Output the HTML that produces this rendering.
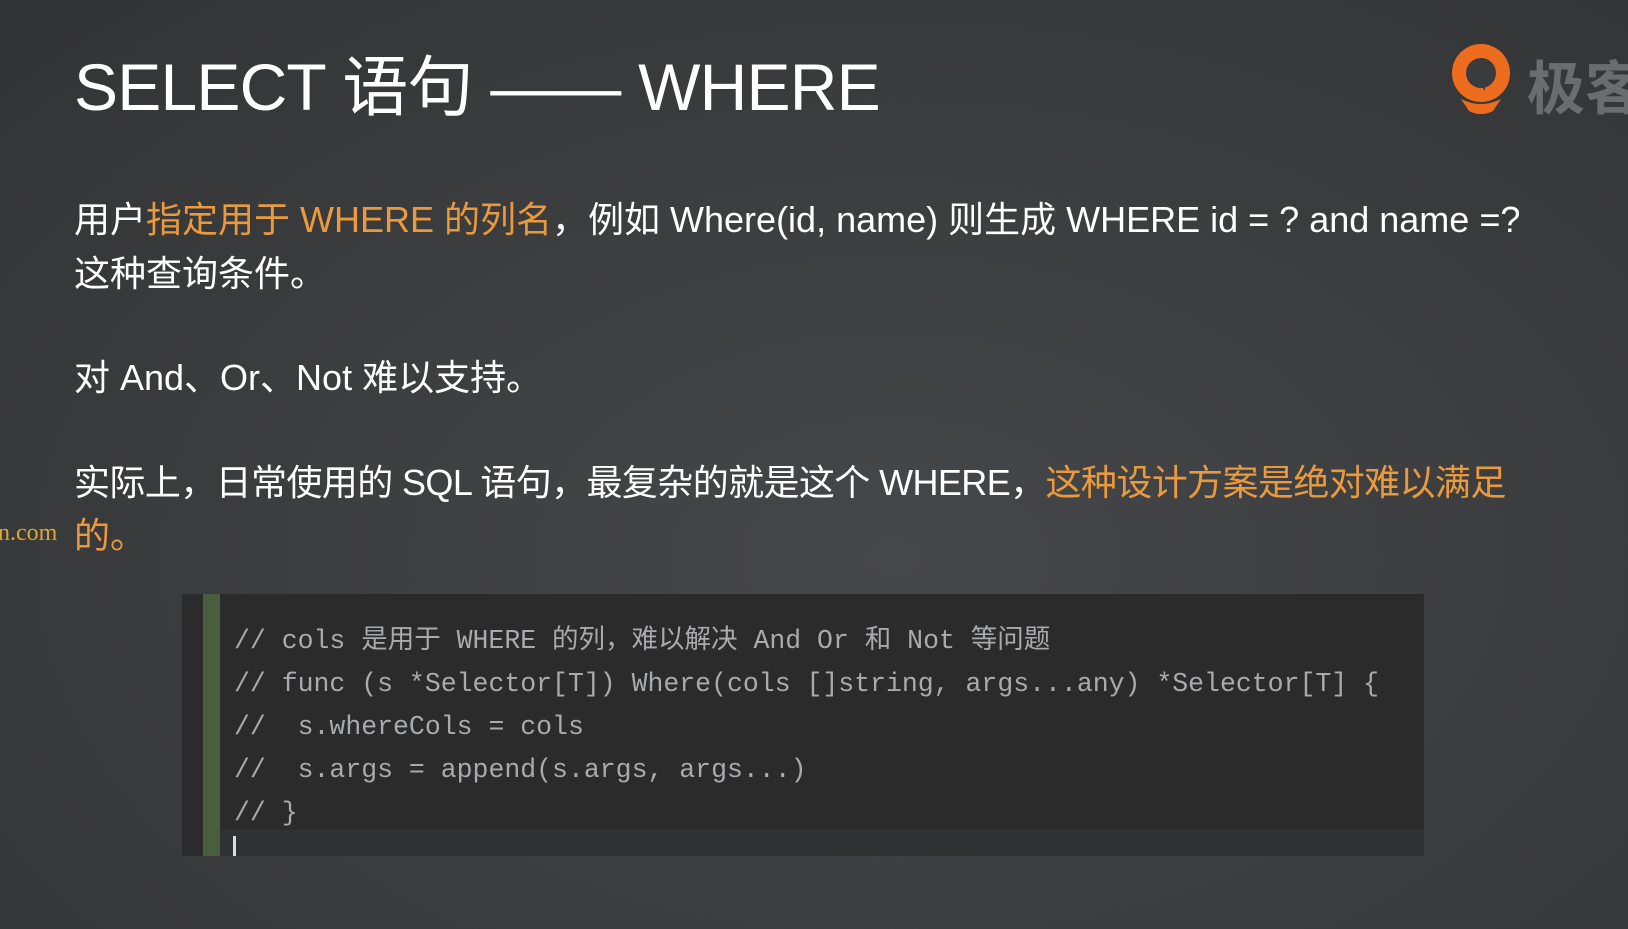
<!DOCTYPE html>
<html><head><meta charset="utf-8"><style>
html,body{margin:0;padding:0}
body{width:1628px;height:929px;overflow:hidden;position:relative;
background:radial-gradient(ellipse at 55% 60%,#46474a 0%,#3b3c3e 55%,#323335 100%);
font-family:"Liberation Sans","Noto Sans CJK SC",sans-serif;color:#fff}
.t{position:absolute;white-space:nowrap}
.o{color:#ea9a3c}
.code{position:absolute;left:182px;top:594px;width:1242px;height:262px;background:#2b2b2c}
.bar{position:absolute;left:21px;top:0;width:17px;height:262px;background:#4a5e3f}
.cl{position:absolute;left:52px;height:30px;line-height:30px;font-family:"Liberation Mono","Noto Sans CJK SC",monospace;font-size:26.5px;color:#a9aaac;white-space:pre}
.cur{position:absolute;left:38px;top:236px;width:1204px;height:26px;background:#313233}
</style></head><body>
<div class="t" style="left:74px;top:47px;font-size:66px;line-height:80px;letter-spacing:-0.8px">SELECT 语句 —— WHERE</div>
<svg style="position:absolute;left:1449px;top:43px" width="64" height="72" viewBox="0 0 64 72">
<circle cx="32" cy="30" r="29" fill="#ee6c1e"/>
<circle cx="32" cy="30" r="15" fill="#3a3b3d"/>
<path d="M12 56 Q32 66 52 56 L44 68 Q32 74 20 68 Z" fill="#ee6c1e"/>
<path d="M28 36 L36 22 L36 48 Z" fill="#3a3b3d"/>
</svg>
<div class="t" style="left:1527px;top:42px;font-size:58px;font-weight:bold;color:#6b6c6e">极客</div>
<div class="t" style="left:74px;top:191px;font-size:36px">用户<span class="o">指定用于 WHERE 的列名</span>，例如 Where(id, name) 则生成 WHERE id = ? and name =?</div>
<div class="t" style="left:74px;top:245px;font-size:36px">这种查询条件。</div>
<div class="t" style="left:74px;top:349px;font-size:36px">对 And、Or、Not 难以支持。</div>
<div class="t" style="left:74px;top:454px;font-size:36px;letter-spacing:-0.6px">实际上，日常使用的 SQL 语句，最复杂的就是这个 WHERE，<span class="o">这种设计方案是绝对难以满足</span></div>
<div class="t o" style="left:74px;top:507px;font-size:36px">的。</div>
<div class="t" style="left:-2px;top:520px;font-size:24px;color:#e0a530;font-family:'Liberation Serif',serif">n.com</div>
<div class="code">
<div class="cur"></div>
<div class="bar"></div>
<div class="cl" style="top:32px">// cols 是用于 WHERE 的列，难以解决 And Or 和 Not 等问题</div>
<div class="cl" style="top:75px">// func (s *Selector[T]) Where(cols []string, args...any) *Selector[T] {</div>
<div class="cl" style="top:118px">//  s.whereCols = cols</div>
<div class="cl" style="top:161px">//  s.args = append(s.args, args...)</div>
<div class="cl" style="top:204px">// }</div>
<div style="position:absolute;left:51px;top:242px;width:3px;height:20px;background:#ddd"></div>
</div>
</body></html>
